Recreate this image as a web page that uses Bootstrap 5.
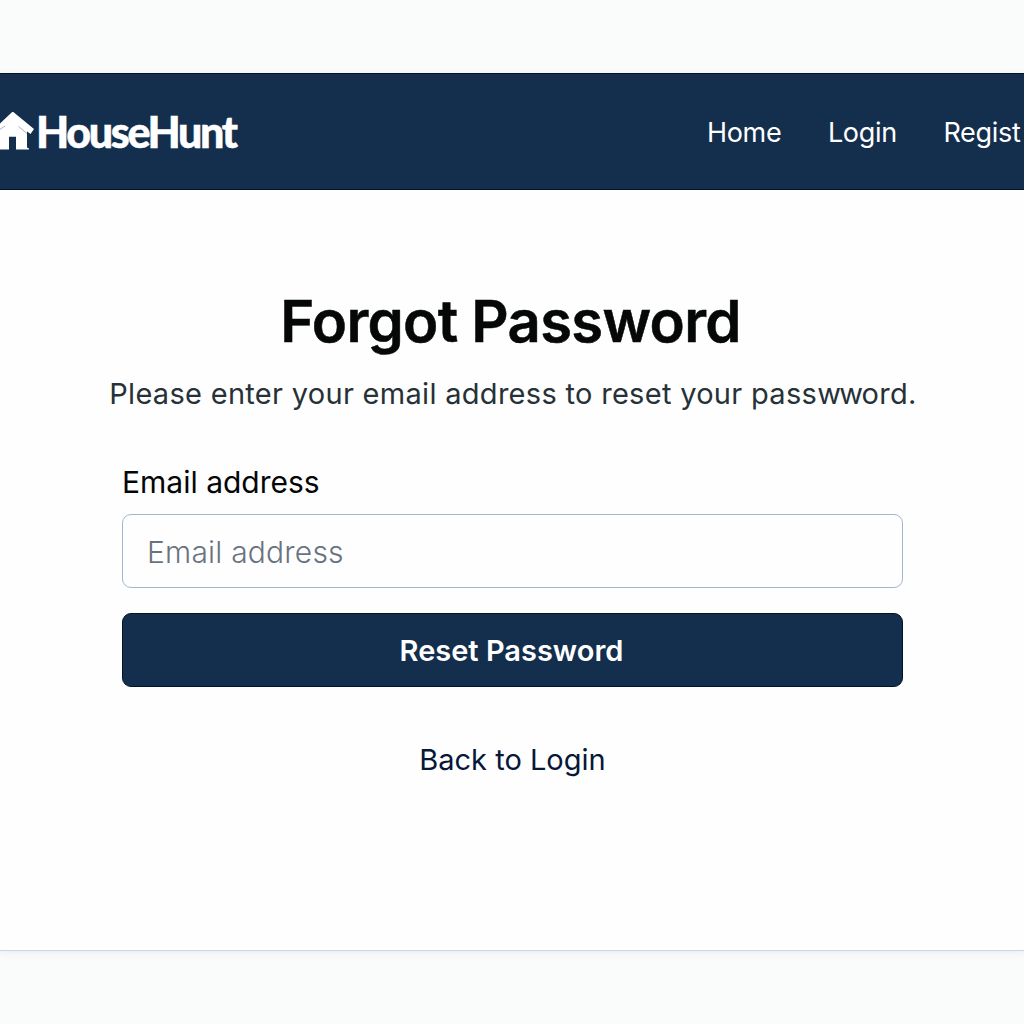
<!DOCTYPE html>
<html lang="en">
<head>
<meta charset="utf-8">
<meta name="viewport" content="width=device-width, initial-scale=1">
<title>HouseHunt - Forgot Password</title>
<link href="https://cdn.jsdelivr.net/npm/bootstrap@5.3.0/dist/css/bootstrap.min.css" rel="stylesheet">
<style>
body{font-family:Inter,"Liberation Sans",sans-serif;background:#fafbfb;height:1024px;overflow:hidden;padding-top:73px}
.page-panel{height:878px;background:#fefefe;border-bottom:1px solid #c9d8e5;box-shadow:0 2px 8px rgba(70,100,130,.09)}
.site-nav{height:117px;background:#142e4d;border-top:1px solid #03132c;border-bottom:1px solid #03132c}
.site-nav .navbar-brand{font-family:Lato,sans-serif;font-weight:900;font-size:43px;line-height:60px;letter-spacing:-2.35px;-webkit-text-stroke:.5px #fff}
.brand-icon{width:36px;height:40px;margin-left:-1px;margin-right:1px}
.brand-name{padding-top:1px}
.site-nav .nav-link{font-size:27px;line-height:40px;letter-spacing:-.3px;color:#fff;padding-top:2px!important}
.top-links{gap:46.500px;margin-right:3.500px}
.reset-title{font-size:58px;line-height:70px;font-weight:600;letter-spacing:-.7px;color:#060808;padding-top:96px;margin-left:-3px;-webkit-text-stroke:.5px #060808}
.reset-text{font-size:29px;line-height:40px;letter-spacing:.3px;color:#263138;margin-top:18px;margin-left:2px}
.tight-pair{letter-spacing:-1.5px}
.reset-form{width:781px;margin-left:1px}
.reset-form .form-label{font-size:30px;line-height:40px;color:#050607}
.reset-form .form-control{height:74px;font-size:30px;font-weight:350;letter-spacing:.2px;border-color:#a4b6ca;border-radius:9px;padding:2px 25px 0 24px;background:#fefefe;margin-top:4px}
.reset-form .form-control::placeholder{color:#69737f}
.reset-form .btn{height:74px;background:#142e4d;border:1px solid #03132c;border-radius:9px;font-size:29px;font-weight:600;color:#fff;margin-top:25px;padding:1px 2px 0 0}
.back-link{font-size:29px;line-height:40px;color:#07173a;margin-top:53px;margin-left:1px}
</style>
</head>
<body>
<div class="page-panel">
  <nav class="site-nav navbar p-0 d-flex flex-nowrap justify-content-between">
    <a class="navbar-brand d-flex align-items-center text-white p-0 m-0" href="#">
      <svg class="brand-icon" viewBox="-1 0 36 40" fill="#fff" stroke="none"><path d="M12.700-.5 34 17 30.500 22 27 19.500V35.500L29 36.500V37.500H16V24.800H9V37.500H-2V13.500Z"/><path d="M18.500 14.500 27 21.500M-1 18 5 14" fill="none" stroke="#8fa0b4" stroke-width=".8"/></svg>
      <span class="brand-name">HouseHunt</span>
    </a>
    <div class="top-links d-flex">
      <a class="nav-link p-0" href="#">Home</a>
      <a class="nav-link p-0" href="#">Login</a>
      <a class="nav-link p-0" href="#">Regist</a>
    </div>
  </nav>
  <main class="d-flex flex-column align-items-center">
    <h1 class="reset-title mb-0">Forgot Password</h1>
    <p class="reset-text mb-0 text-nowrap">Please enter your email address to reset your pass<span class="tight-pair">ww</span>ord.</p>
    <form class="reset-form d-flex flex-column mt-5">
      <label class="form-label mb-2" for="email">Email address</label>
      <input class="form-control" id="email" type="email" placeholder="Email address">
      <button class="btn" type="button">Reset Password</button>
    </form>
    <a class="back-link text-decoration-none" href="#">Back to Login</a>
  </main>
</div>
</body>
</html>
